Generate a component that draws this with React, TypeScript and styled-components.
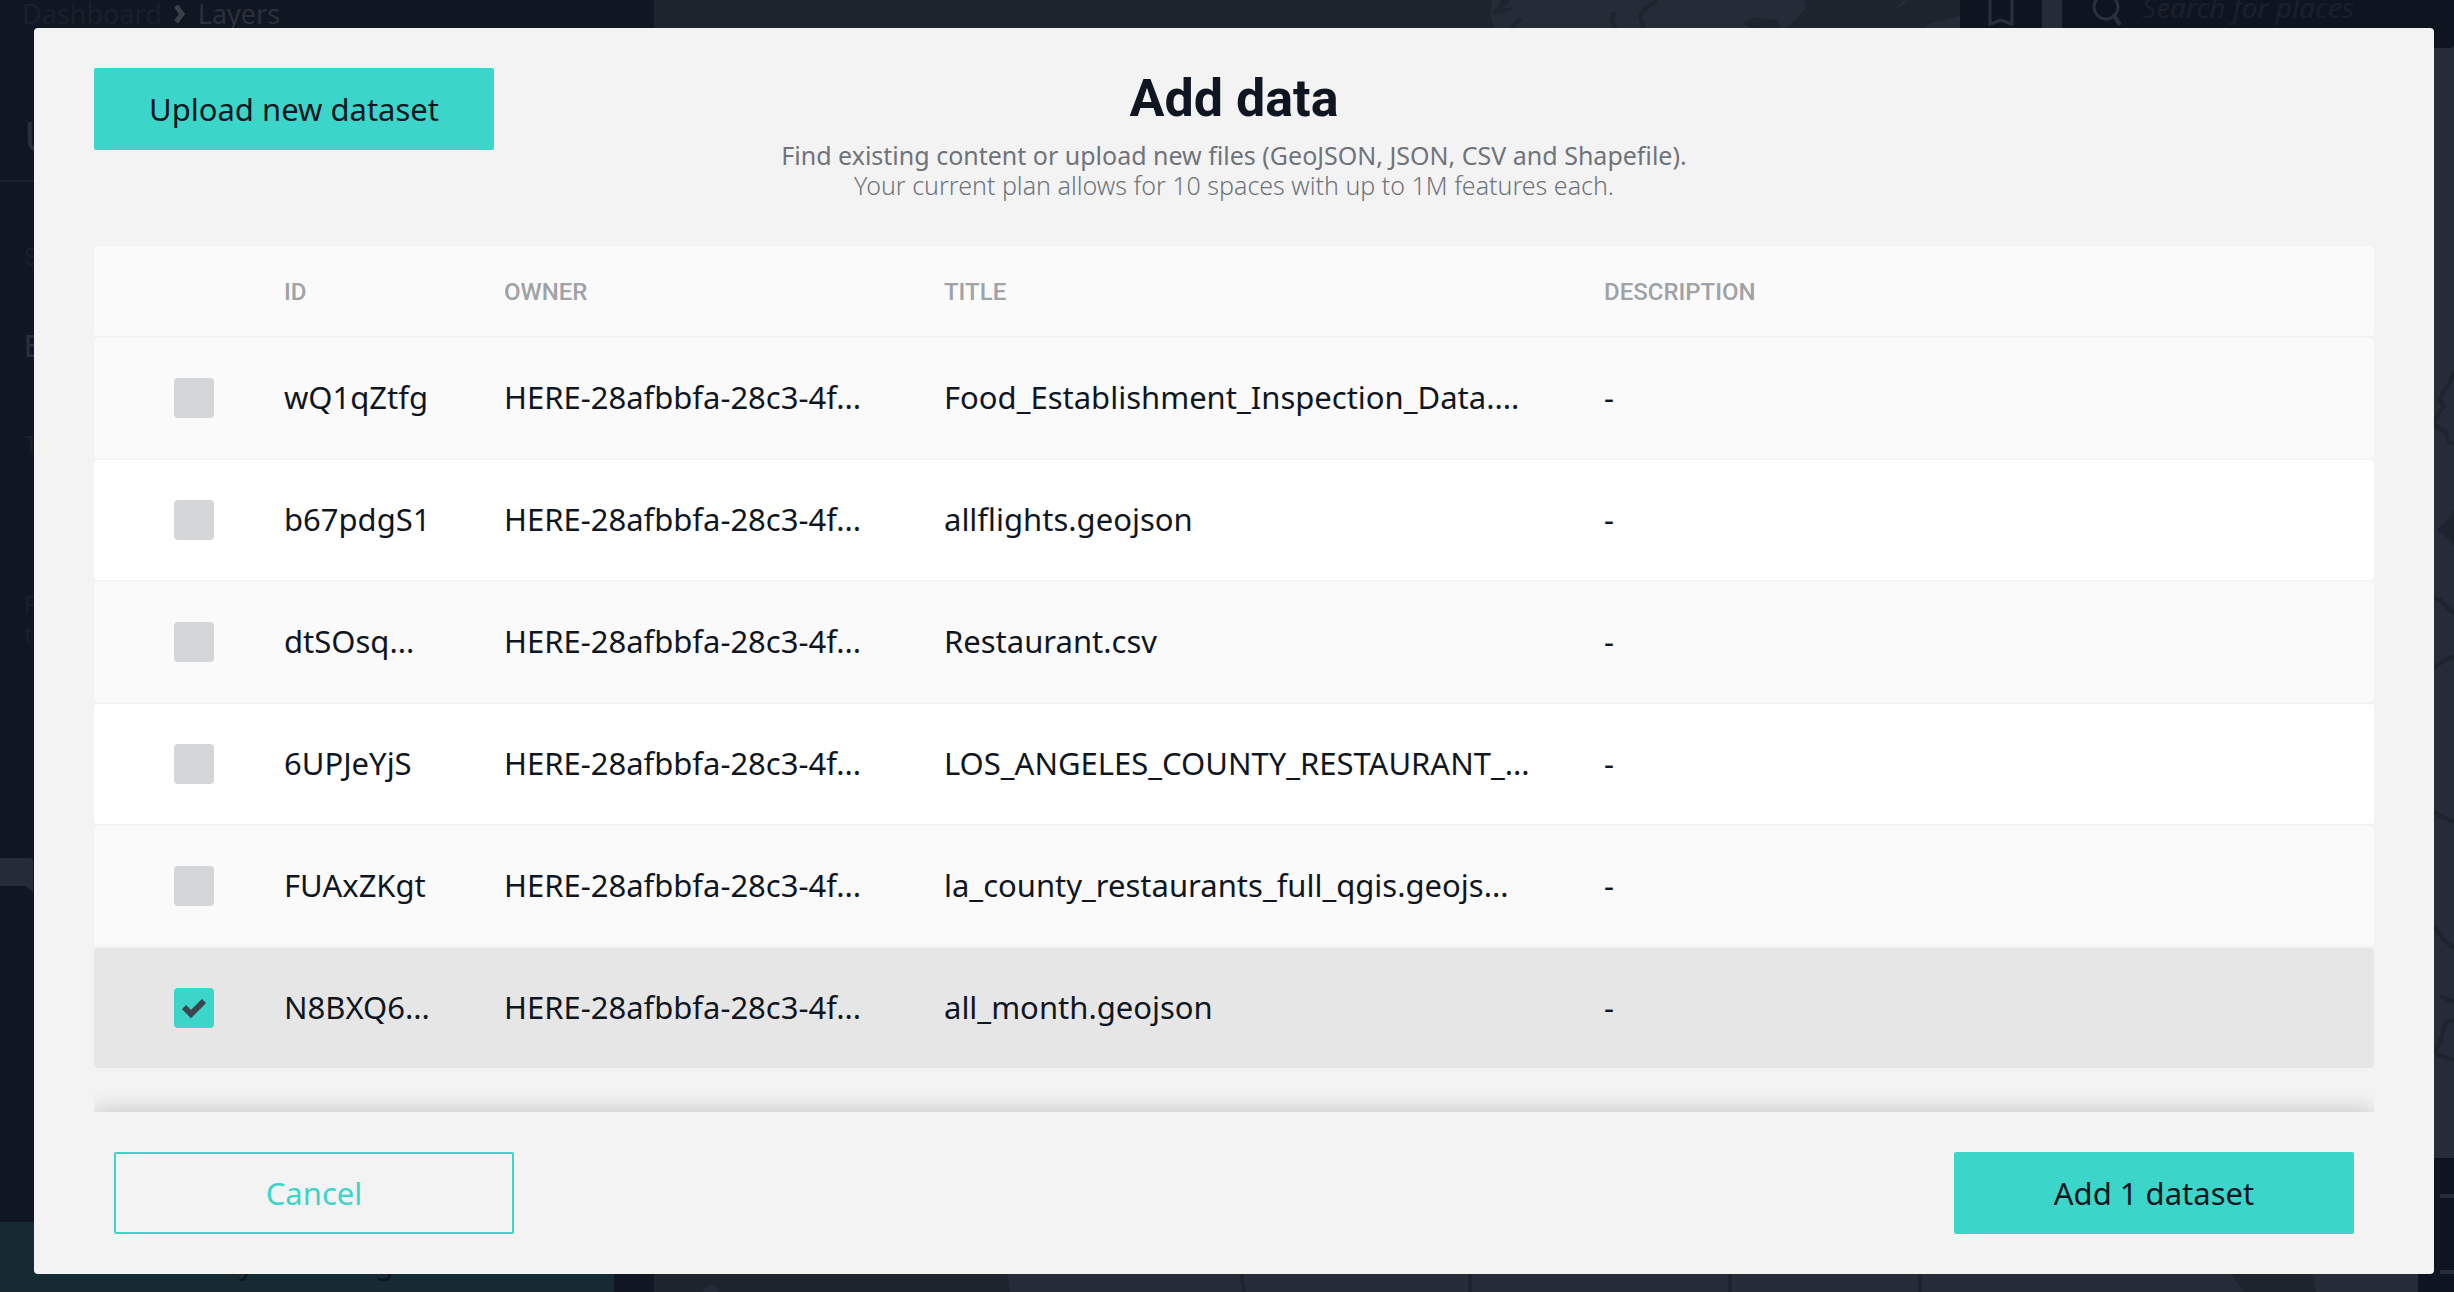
import React, { useState } from "react";
import styled, { createGlobalStyle, css } from "styled-components";

const color = {
  ink: "#0f1621",
  navy: "#111722",
  deep: "#0f1520",
  land: "#252b37",
  sea: "#1d242d",
  border: "#1c222d",
  ghost: "#1a202b",
  faint: "#2a303b",
  chevron: "#3a404a",
  accent: "#3bd5c9",
  accentDim: "#162a32",
  panel: "#f3f3f3",
  row: "#fafafa",
  selected: "#e6e6e6",
  box: "#d5d6d8",
  label: "#9fa2a6",
  muted: "#6f737a",
};

const bodyFont = `"Noto Sans", "Open Sans", sans-serif`;
const labelFont = `Roboto, "Noto Sans", sans-serif`;

const GlobalStyle = createGlobalStyle`
  *, *::before, *::after { box-sizing: border-box; }
  body { margin: 0; background: ${color.navy}; font-family: ${bodyFont}; color: ${color.ink}; }
  button, input { font: inherit; }
  h1, p { margin: 0; }
`;

const Screen = styled.div`
  position: relative;
  height: 100vh;
  overflow: hidden;
`;

const Backdrop = styled.div`
  position: absolute;
  inset: 0;
  display: grid;
  grid-template-columns: 654px 1fr;
`;

const Sidebar = styled.aside`
  display: flex;
  flex-direction: column;
  overflow: hidden;
  white-space: nowrap;
  background: ${color.navy};
`;

const Crumbs = styled.nav`
  display: flex;
  flex: none;
  align-items: center;
  gap: 12px;
  height: 28px;
  padding-left: 22px;
  font-size: 27px;
  line-height: 28px;
  color: ${color.faint};

  a { color: ${color.ghost}; text-decoration: none; }
`;

const SideHeading = styled.div`
  flex: none;
  height: 154px;
  padding: 80px 0 0 24px;
  border-bottom: 2px solid ${color.border};
  font-size: 42px;
  line-height: 56px;
  color: ${color.faint};
`;

const SideLine = styled.div<{ $height: number; $bright?: boolean }>`
  display: flex;
  flex: none;
  flex-direction: column;
  justify-content: center;
  height: ${(p) => p.$height}px;
  padding-left: 24px;
  font-family: ${labelFont};
  font-size: ${(p) => (p.$bright ? 31 : 24)}px;
  line-height: 30px;
  color: ${(p) => (p.$bright ? color.faint : color.ghost)};
`;

const SideTag = styled.div`
  flex: none;
  width: 33px;
  height: 34px;
  margin-top: 146px;
  border-radius: 0 4px 0 0;
  background: ${color.land};
  clip-path: polygon(0 0, 100% 0, 100% 100%, 78% 82%, 0 82%);
`;

const SideFooter = styled.div`
  display: flex;
  flex: none;
  align-items: flex-end;
  justify-content: center;
  width: 614px;
  height: 70px;
  margin-top: auto;
  padding-bottom: 12px;
  background: ${color.accentDim};
  font-size: 31px;
  line-height: 36px;
  color: ${color.deep};
`;

const MapArea = styled.div`
  position: relative;
  overflow: hidden;
  background: ${color.land};
`;

const MapDrawing = styled.svg`
  display: block;
  width: 100%;
  height: 100%;
`;

const MapTools = styled.div`
  position: absolute;
  top: 0;
  right: 0;
  display: flex;
  gap: 20px;
`;

const MapTool = styled.div`
  display: flex;
  justify-content: center;
  width: 82px;
  height: 48px;
  background: ${color.deep};
`;

const MapSearch = styled.div`
  display: flex;
  gap: 20px;
  width: 392px;
  height: 48px;
  padding-left: 30px;
  border-radius: 0 0 4px 4px;
  background: ${color.deep};
  font-size: 28px;
  font-style: italic;
  line-height: 14px;
  color: ${color.ghost};
`;

const MapZoom = styled.div`
  position: absolute;
  right: 0;
  bottom: 0;
  display: flex;
  flex-direction: column;
  gap: 72px;
  width: 36px;
  height: 134px;
  padding: 36px 0 0 22px;
  background: ${color.deep};

  span { height: 4px; background: ${color.land}; }
`;

const Overlay = styled.div`
  position: absolute;
  inset: 0;
  display: flex;
  padding: 28px 20px 18px 34px;
`;

const Dialog = styled.section`
  display: flex;
  flex: 1;
  flex-direction: column;
  min-width: 0;
  padding: 40px 60px 0;
  border-radius: 4px;
  background: ${color.panel};
`;

const Header = styled.header`
  display: grid;
  grid-template-columns: 400px 1fr 400px;
  align-items: start;
  height: 176px;
`;

const Intro = styled.div`
  text-align: center;
  font-size: 25px;
  line-height: 30px;
  color: ${color.muted};
`;

const Title = styled.h1`
  margin-bottom: 10px;
  font: 700 52px/62px ${labelFont};
  color: ${color.ink};
`;

const PlanNote = styled.p`
  font-weight: 300;
`;

const Button = styled.button<{ $outline?: boolean }>`
  width: 400px;
  height: 82px;
  padding: 0 20px;
  border: 2px solid ${color.accent};
  border-radius: 2px;
  background: ${color.accent};
  font-size: 31px;
  line-height: 40px;
  color: ${color.ink};
  cursor: pointer;

  ${(p) =>
    p.$outline &&
    css`
      background: transparent;
      color: ${color.accent};
    `}
`;

const ListArea = styled.div`
  position: relative;
  flex: 1;
  min-height: 0;
  overflow: hidden;
`;

const Table = styled.table`
  width: 100%;
  table-layout: fixed;
  border-spacing: 0 2px;
  text-align: left;
`;

const Col = styled.col<{ $share: number }>`
  width: ${(p) => p.$share}%;
`;

const HeadCell = styled.th`
  height: 90px;
  padding: 2px 20px 0;
  background: ${color.row};
  font: 500 24px/30px ${labelFont};
  color: ${color.label};

  &:first-child { border-radius: 4px 0 0 4px; }
  &:last-child { border-radius: 0 4px 4px 0; }
`;

const Cell = styled.td`
  height: 120px;
  padding: 0 20px 2px;
  overflow: hidden;
  white-space: nowrap;
  font-size: 31px;
  line-height: 40px;

  &:first-child { padding: 0 0 0 80px; border-radius: 4px 0 0 4px; }
  &:last-child { border-radius: 0 4px 4px 0; }
`;

const Row = styled.tr<{ $selected: boolean }>`
  background: ${(p) => (p.$selected ? color.selected : color.row)};

  &:nth-child(even) {
    background: ${(p) => (p.$selected ? color.selected : "#fff")};
  }
`;

const CheckWrap = styled.label`
  display: grid;
  width: 40px;
  height: 40px;
  cursor: pointer;

  > * { grid-area: 1 / 1; place-self: center; }
`;

const CheckInput = styled.input`
  appearance: none;
  width: 40px;
  height: 40px;
  margin: 0;
  border-radius: 4px;
  background: ${color.box};

  &:checked { background: ${color.accent}; }
`;

const CheckMark = styled.svg`
  pointer-events: none;
`;

const ScrollShade = styled.div`
  position: absolute;
  inset: auto 0 0;
  height: 30px;
  overflow: hidden;

  &::after {
    content: "";
    display: block;
    height: 30px;
    margin-top: 30px;
    box-shadow: 0 0 24px rgba(0, 0, 0, 0.22);
  }
`;

const Footer = styled.footer`
  display: flex;
  justify-content: space-between;
  padding: 40px 20px;
`;

interface Dataset {
  id: string;
  owner: string;
  title: string;
  description: string;
}

const OWNER = "HERE-28afbbfa-28c3-4f...";

const datasets: Dataset[] = [
  { id: "wQ1qZtfg", owner: OWNER, title: "Food_Establishment_Inspection_Data....", description: "-" },
  { id: "b67pdgS1", owner: OWNER, title: "allflights.geojson", description: "-" },
  { id: "dtSOsq...", owner: OWNER, title: "Restaurant.csv", description: "-" },
  { id: "6UPJeYjS", owner: OWNER, title: "LOS_ANGELES_COUNTY_RESTAURANT_...", description: "-" },
  { id: "FUAxZKgt", owner: OWNER, title: "la_county_restaurants_full_qgis.geojs...", description: "-" },
  { id: "N8BXQ6...", owner: OWNER, title: "all_month.geojson", description: "-" },
];

const columnShares = [7.456, 9.65, 19.298, 28.947, 34.649];

function MapBackground() {
  return (
    <MapArea>
      <MapDrawing viewBox="0 0 1800 1292" preserveAspectRatio="xMaxYMin slice" aria-hidden="true">
        <path d="M0 0H838L836 14L840 28H0Z" fill={color.sea} />
        <path d="M1150 0H1306V30H1130L1142 20L1152 8Z" fill={color.sea} />
        <path d="M1306 16L1290 20L1276 23L1268 30H1306ZM1254 0L1248 6L1242 8L1250 0Z" fill={color.land} />
        <path d="M1088 24L1098 18L1124 20L1126 30H1104Z" fill={color.sea} />
        <path d="M838 14L848 0H856L850 8L862 7L850 13L838 15Z" fill={color.sea} />
        <path d="M0 1264H352L356 1292H0Z" fill={color.sea} />
        <path d="M48 1292L56 1284L62 1286L66 1292Z" fill={color.land} />
        <path d="M1570 1264H1656L1662 1292H1590Z" fill={color.sea} />
        <g fill="none" stroke={color.sea} strokeWidth="4">
          <path d="M866 18L858 28M960 12L958 20L962 30M1004 0L992 8L986 16L990 30" />
          <path d="M586 1264L590 1292M816 1264V1292M1076 1264V1292M1266 1264V1292" />
          <path d="M1800 372L1796 382L1788 394L1786 400L1790 406L1780 420L1782 426L1792 432L1794 442L1800 444" />
          <path d="M1780 598L1786 600L1800 614M1780 668L1788 662L1800 656M1780 812L1790 818L1800 822" />
          <path d="M1780 926L1790 940L1800 948M1786 996L1800 1002M1780 1054L1786 1042L1792 1022L1800 1020M1782 1054L1800 1060" />
        </g>
        <path d="M1800 510L1794 520L1784 528L1784 532L1794 538L1800 546Z" fill={color.sea} />
      </MapDrawing>
      <MapTools>
        <MapTool>
          <svg width="26" height="28" viewBox="0 0 26 28" fill="none" stroke={color.faint} strokeWidth="3" aria-hidden="true">
            <path d="M2 0V24L13 20L24 24V0" />
          </svg>
        </MapTool>
        <MapSearch>
          <svg width="30" height="28" viewBox="0 0 30 28" fill="none" stroke={color.faint} strokeWidth="3" aria-hidden="true">
            <circle cx="14" cy="7" r="12" />
            <path d="M21 14L28 25" strokeWidth="4" />
          </svg>
          Search for places
        </MapSearch>
      </MapTools>
      <MapZoom>
        <span />
        <span />
      </MapZoom>
    </MapArea>
  );
}

export default function App() {
  const [selected, setSelected] = useState<string[]>(["N8BXQ6..."]);

  const toggle = (id: string) =>
    setSelected((ids) => (ids.includes(id) ? ids.filter((other) => other !== id) : [...ids, id]));

  return (
    <Screen>
      <GlobalStyle />
      <Backdrop>
        <Sidebar>
          <Crumbs>
            <a href="#dashboard">Dashboard</a>
            <svg width="12" height="18" viewBox="0 0 12 18" fill="none" stroke={color.chevron} strokeWidth="5" aria-hidden="true">
              <path d="M2 1L8 9L2 17" />
            </svg>
            <span>Layers</span>
          </Crumbs>
          <SideHeading>U</SideHeading>
          <SideLine $height={150}>S</SideLine>
          <SideLine $height={30} $bright>E</SideLine>
          <SideLine $height={166}>T</SideLine>
          <SideLine $height={184}>
            <span>P</span>
            <span>t</span>
          </SideLine>
          <SideTag />
          <SideFooter>Layer settings</SideFooter>
        </Sidebar>
        <MapBackground />
      </Backdrop>
      <Overlay>
        <Dialog role="dialog" aria-labelledby="dialog-title">
          <Header>
            <Button type="button">Upload new dataset</Button>
            <Intro>
              <Title id="dialog-title">Add data</Title>
              <p>Find existing content or upload new files (GeoJSON, JSON, CSV and Shapefile).</p>
              <PlanNote>Your current plan allows for 10 spaces with up to 1M features each.</PlanNote>
            </Intro>
          </Header>
          <ListArea>
            <Table>
              <colgroup>
                {columnShares.map((share) => (
                  <Col key={share} $share={share} />
                ))}
              </colgroup>
              <thead>
                <tr>
                  <HeadCell aria-label="Selected" />
                  <HeadCell>ID</HeadCell>
                  <HeadCell>OWNER</HeadCell>
                  <HeadCell>TITLE</HeadCell>
                  <HeadCell>DESCRIPTION</HeadCell>
                </tr>
              </thead>
              <tbody>
                {datasets.map((item) => {
                  const checked = selected.includes(item.id);
                  return (
                    <Row key={item.id} $selected={checked}>
                      <Cell>
                        <CheckWrap>
                          <CheckInput
                            type="checkbox"
                            aria-label={item.title}
                            checked={checked}
                            onChange={() => toggle(item.id)}
                          />
                          {checked && (
                            <CheckMark width="24" height="20" viewBox="0 0 24 20" fill="none" stroke="#3d4650" strokeWidth="6" aria-hidden="true">
                              <path d="M2 9L9 16L22 3" />
                            </CheckMark>
                          )}
                        </CheckWrap>
                      </Cell>
                      <Cell>{item.id}</Cell>
                      <Cell>{item.owner}</Cell>
                      <Cell>{item.title}</Cell>
                      <Cell>{item.description}</Cell>
                    </Row>
                  );
                })}
              </tbody>
            </Table>
            <ScrollShade />
          </ListArea>
          <Footer>
            <Button type="button" $outline>Cancel</Button>
            <Button type="button">{`Add ${selected.length} dataset${selected.length === 1 ? "" : "s"}`}</Button>
          </Footer>
        </Dialog>
      </Overlay>
    </Screen>
  );
}
